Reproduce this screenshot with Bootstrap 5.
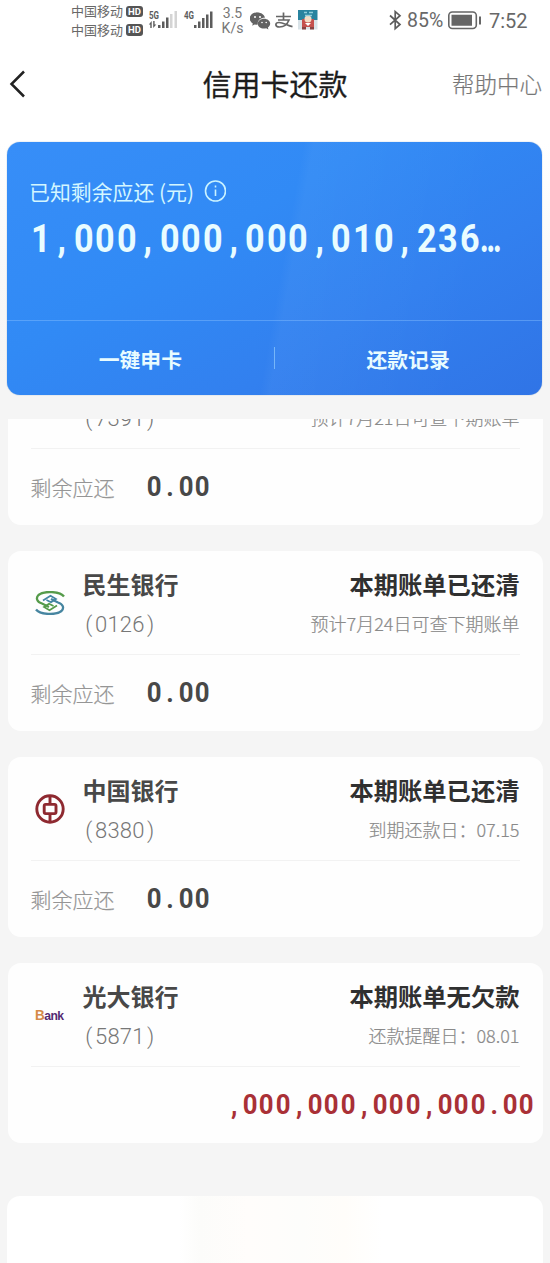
<!DOCTYPE html>
<html lang="zh-CN">
<head>
<meta charset="utf-8">
<meta name="viewport" content="width=device-width, initial-scale=1">
<title>信用卡还款</title>
<link href="https://cdn.jsdelivr.net/npm/bootstrap@5.3.0/dist/css/bootstrap.min.css" rel="stylesheet">
<style>
body{font-family:"Noto Sans CJK SC",sans-serif;background:#f5f5f5;color:#333;height:1263px;overflow:hidden;line-height:1}
.screen{height:1263px;background:linear-gradient(#fff 0,#fff 142px,#f8f8f8 280px,#f5f5f5 380px,#f5f5f5 100%)}
.status{height:42px;padding-left:71px;color:#686868}
.carrier{width:73px;font-size:13px;line-height:18.5px;margin-top:-1px}
.carrier .gap-1{gap:3px!important}
.hd{font:bold 9.5px/11px Roboto,sans-serif;width:17px;height:11.5px;background:#555;color:#fff;border-radius:3px;text-align:center}
.speed{width:29px;font:14px/15px Roboto,sans-serif;text-align:center;margin-left:-2px;margin-right:-1px;color:#777}
.latin{font-family:Roboto,sans-serif}
.pct{font-size:19.5px;width:44px;padding-left:3px}
.clock{font-size:20px;width:65px;padding-left:4px}
.topbar{height:86px;padding:0 8px 3px}
.topbar h1{font-size:29px;font-weight:400;color:#1c1c1c;-webkit-text-stroke:.3px #1c1c1c}
.help{font-size:22.5px;color:#777;font-weight:300;-webkit-text-stroke:.2px #777}
.side{width:92px}
.hero{margin:14px 8.500px 0 7px;height:253px;border-radius:13px;color:#e9fcff;background:linear-gradient(100deg,transparent 51.2%,rgba(255,255,255,.035) 53%,rgba(255,255,255,0) 85%),linear-gradient(150deg,#378ef8 0,#318af5 38%,#3280ef 68%,#3074e6 100%);box-shadow:0 0 1px #5c84ad}
.hero-main{height:179px;padding:37px 24px 0 22px;border-bottom:1px solid rgba(140,195,255,.42)}
.known{font-size:20.900px;line-height:24px;color:#d3f6ff}
.total{font:bold 38px/44px Roboto,sans-serif;margin:14px 0 0 1px;white-space:nowrap}
.total i,.total b{display:inline-block;font-style:normal;width:21.450px;text-align:center}
.total i{transform:scaleX(.9)}
.total .dots{width:24px;text-align:left;transform:scaleX(.72);transform-origin:0 50%}
.hero-foot{height:74px;font-size:20.800px;font-weight:700;padding-top:2px}
.vline{width:1px;height:22px;background:rgba(160,215,255,.6);margin-top:-3px}
.list-clip{margin-top:23.500px;height:844.500px;overflow:hidden;padding:0 7.500px}
.bill{height:180px;margin-bottom:26px;border-radius:13px;background:#fefefe;padding:0 23px}
.bill.first{margin-top:-73.500px}
.bill-top{height:103.500px;border-bottom:1px solid #f2f2f2}
.logo{width:52px;padding-left:4px;height:104px}
.bank{font-size:24px;line-height:32px;font-weight:700;color:#484848;margin-top:17px}
.state{font-size:24.300px;line-height:32px;font-weight:700;color:#303030;margin-top:17px}
.num{font:300 22px/28px Roboto,sans-serif;color:#777;margin-top:11px}
.num i,.amt i{display:inline-block;text-align:center;font-style:normal}
.num i{width:12.400px}
.note{font-size:18px;line-height:28px;color:#8a8a8a;margin-top:8.500px;font-weight:300;-webkit-text-stroke:.2px #8a8a8a}
.rest{height:76px;padding-top:1px}
.due{font-size:21px;color:#959595;width:115px;font-weight:300;-webkit-text-stroke:.2px #959595}
.amt{font:bold 28px/32px Roboto,sans-serif;color:#484848}
.amt i{width:16.200px;transform:scaleX(.92)}
.red{color:#a93036;margin-right:-15px}
.red i{width:16.250px}
.blank{height:100px;margin-top:53px;margin-left:-1px;background:linear-gradient(90deg,#fff 32%,#fcfcfa 36%,#fffdfb 45%,#fdfdfb 55%,#fffdfa 63%,#fff 70%)}
.ebank{font:bold 13.5px/14px "Liberation Sans",sans-serif;color:#542a72;letter-spacing:-.6px;transform:scaleX(.9);transform-origin:0 50%}
.ebank span{color:#d58a48;font-size:15px}
</style>
</head>
<body>
<div class="screen d-flex flex-column">
<header class="status d-flex align-items-center flex-shrink-0">
  <div class="carrier">
    <div class="d-flex align-items-center gap-1"><span>中国移动</span><span class="hd">HD</span></div>
    <div class="d-flex align-items-center gap-1"><span>中国移动</span><span class="hd">HD</span></div>
  </div>
  <svg width="76" height="42" viewBox="144 0 76 42" fill="#5c5c5c">
    <g font-family="Roboto,sans-serif" font-weight="700" font-size="10"><text x="149" y="18.500" textLength="10" lengthAdjust="spacingAndGlyphs">5G</text><text x="184" y="18.500" textLength="10" lengthAdjust="spacingAndGlyphs">4G</text></g>
    <path d="M158 25h2.500v3H158zM162 21.500h2.500V28H162zM166 17.500h2.500V28H166zM194 25h2.500v3H194zM198 21.500h2.500V28H198zM202 18h2.500v10H202zM206 14.500h2.500V28H206zM210 11.500h2.500V28H210z"/>
    <path fill="#d4d4d4" d="M170 14h2.500v14H170zM174.500 11h2.500v17h-2.500z"/>
    <path d="M150.300 28v-3.500H148.800l2.900-3.500v7zM154.600 21v3.500h1.700L153.200 28v-7z"/>
  </svg>
  <div class="speed">3.5<br>K/s</div>
  <svg width="74" height="42" viewBox="247 0 74 42">
    <g fill="#636363"><path d="M258.500 12.500c-4.300 0-7.500 2.700-7.500 6 0 2 1.100 3.700 2.900 4.800l-.7 2.400 2.800-1.400 2.500.3z"/><path d="M258.500 12.500c3.700 0 6.800 2.200 7.400 5.200-4.200-.1-7.600 2.500-7.400 6.900-4.500.1-7.500-2.700-7.500-6.100s3.200-6 7.500-6z"/><path d="M265 18.700c3.600 0 6.200 2.300 6.200 4.900 0 1.700-1 3-2.300 3.900l.5 1.900-2.200-1.200c-4.600 1.100-8.400-1.200-8.400-4.500 0-2.700 2.700-5 6.200-5z"/></g>
    <g fill="#fff"><circle cx="256" cy="17" r="1"/><circle cx="261" cy="17" r="1"/><circle cx="263" cy="22.500" r=".8"/><circle cx="267.200" cy="22.500" r=".8"/></g>
    <path d="M277 16.500h15M284.500 12.500v7M279 20h11c-1.500 3.800-5 7-9.500 7-5 0-4.500-4.500-.5-4.500 4.500 0 8 3 13.500 4.200" fill="none" stroke="#666" stroke-width="1.700"/>
    <path fill="#28839f" d="M299 10h19.500v10H299z"/><path fill="#d9e3e8" d="M299 20h19.500v9.500H299z"/><path fill="#c5504d" d="M303 19h12v8h-12z"/><circle cx="309" cy="19" r="3.500" fill="#f3dbc4"/><path d="M305 12.500h3m2 0h4m-8 3h7" stroke="#8fcddb" stroke-width="1.300"/><path d="M306 23l3 3 3-3" fill="#fff"/><path fill="#884342" d="M303 27h4v2.500h-4zm8 0h4v2.500h-4z"/>
  </svg>
  <svg class="ms-auto" width="18" height="42" viewBox="386 0 18 42"><path d="M390 15.500l10 9-4.800 4.200V11.500l4.800 4.200-10 9" fill="none" stroke="#5c5c5c" stroke-width="1.700"/></svg>
  <span class="latin pct">85%</span>
  <svg width="37" height="42" viewBox="448 0 37 42"><rect x="448.800" y="12" width="27.500" height="16.500" rx="3.500" fill="none" stroke="#666" stroke-width="1.600"/><path fill="#666" d="M451.500 14.800h20.500v11h-20.500zM479 16.500h2v8h-2z"/></svg>
  <span class="latin clock">7:52</span>
</header>
<nav class="topbar d-flex align-items-center justify-content-between flex-shrink-0">
  <div class="side"><svg width="20" height="30" viewBox="8 69 20 30"><path d="M24 71.500L11.500 84 24 96.500" fill="none" stroke="#222" stroke-width="2.500"/></svg></div>
  <h1 class="m-0">信用卡还款</h1>
  <div class="side help text-end text-nowrap">帮助中心</div>
</nav>
<section class="hero flex-shrink-0">
  <div class="hero-main">
    <div class="known d-flex align-items-center">已知剩余应还 (元)<svg class="ms-2" width="24" height="24" viewBox="0 0 24 24" fill="none" stroke="#c9f2ff" stroke-width="1.600"><circle cx="13.500" cy="12" r="10"/><path d="M13.500 10.500V17M13.500 6.500v2"/></svg></div>
    <div class="total" data-mono="1,000,000,000,010,236"></div>
  </div>
  <div class="hero-foot d-flex align-items-center"><div class="w-50 text-center">一键申卡</div><div class="vline"></div><div class="w-50 text-center">还款记录</div></div>
</section>
<main class="list-clip flex-shrink-0">
  <article class="bill first">
    <div class="bill-top d-flex"><div class="logo"></div><div><div class="bank">&nbsp;</div><div class="num" data-mono="(7391)"></div></div><div class="ms-auto text-end"><div class="state">本期账单已还清</div><div class="note">预计7月21日可查下期账单</div></div></div>
    <div class="rest d-flex align-items-center"><span class="due">剩余应还</span><span class="amt" data-mono="0.00"></span></div>
  </article>
  <article class="bill">
    <div class="bill-top d-flex"><div class="logo d-flex align-items-center"><svg width="30" height="24" viewBox="0 0 30 24" fill="none" stroke-linejoin="miter"><path d="M29 5.500C25 .2 9-.5 3.500 4 .5 7 2 11 7 12.500l7 3.500" stroke="#559b4a" stroke-width="2.300"/><path d="M1 18.500c4 5.300 20 6 25.500 1.500 3-3 1.500-7-3.500-8.500L16 8" stroke="#4685a0" stroke-width="2.300"/><path d="M8 9.500l7.500-4.700L21 8l-5 3.300L11.500 9" stroke="#4386a2" stroke-width="1.700"/><path d="M22 14.500l-7.500 4.700L9 16l5-3.300 4.500 2.300" stroke="#559b4a" stroke-width="1.700"/></svg></div><div><div class="bank">民生银行</div><div class="num" data-mono="(0126)"></div></div><div class="ms-auto text-end"><div class="state">本期账单已还清</div><div class="note">预计7月24日可查下期账单</div></div></div>
    <div class="rest d-flex align-items-center"><span class="due">剩余应还</span><span class="amt" data-mono="0.00"></span></div>
  </article>
  <article class="bill">
    <div class="bill-top d-flex"><div class="logo d-flex align-items-center"><svg width="30" height="30" viewBox="0 0 30 30" fill="none" stroke="#8e2930" stroke-width="2.900"><circle cx="15" cy="15" r="13.200"/><rect x="9.200" y="10.400" width="11.800" height="9.200" rx="1.500"/><path d="M15 2v8M15 20v8"/></svg></div><div><div class="bank">中国银行</div><div class="num" data-mono="(8380)"></div></div><div class="ms-auto text-end"><div class="state">本期账单已还清</div><div class="note">到期还款日：07.15</div></div></div>
    <div class="rest d-flex align-items-center"><span class="due">剩余应还</span><span class="amt" data-mono="0.00"></span></div>
  </article>
  <article class="bill mb-0">
    <div class="bill-top d-flex"><div class="logo d-flex align-items-center"><div class="ebank"><span>B</span>ank</div></div><div><div class="bank">光大银行</div><div class="num" data-mono="(5871)"></div></div><div class="ms-auto text-end"><div class="state">本期账单无欠款</div><div class="note">还款提醒日：08.01</div></div></div>
    <div class="rest d-flex align-items-center justify-content-end"><span class="amt red text-nowrap" data-mono=",000,000,000,000.00"></span></div>
  </article>
  <article class="bill blank"></article>
</main>
</div>
<script>
// Set every character of a figure in a cell of equal width.
document.querySelectorAll('[data-mono]').forEach(function(el){
  el.innerHTML = el.dataset.mono.split('').map(function(c){return '<i>'+c+'</i>';}).join('');
  if (el.classList.contains('total')) el.innerHTML += '<b class="dots">…</b>';
});
</script>
<script src="https://cdn.jsdelivr.net/npm/bootstrap@5.3.0/dist/js/bootstrap.bundle.min.js"></script>
</body>
</html>
